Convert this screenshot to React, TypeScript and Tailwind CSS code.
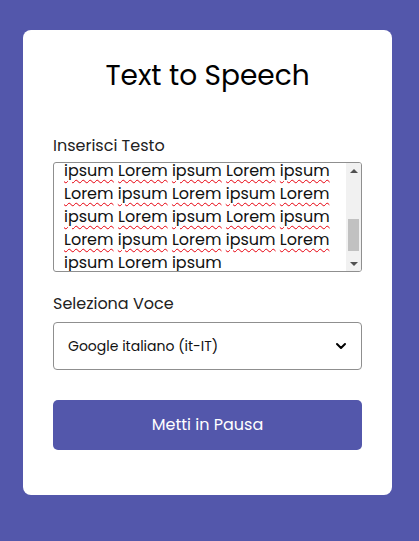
import { ChevronDown } from "lucide-react";

const lines = [
  "ipsum Lorem ipsum Lorem ipsum",
  "Lorem ipsum Lorem ipsum Lorem",
  "ipsum Lorem ipsum Lorem ipsum",
  "Lorem ipsum Lorem ipsum Lorem",
  "ipsum Lorem ipsum",
];

function Word({ text }: { text: string }) {
  return (
    <span className="underline decoration-wavy decoration-red-600 decoration-1 underline-offset-[3px]">
      {text}
    </span>
  );
}

export default function App() {
  return (
    <div className="min-h-[541px] bg-[#5357ab] px-[23px] pt-[30px] pb-[47px] font-['Poppins','Inter',sans-serif]">
      <div className="bg-white rounded-lg px-[30px] pt-[28px] pb-[45px] w-[369px]">
        <h1 className="text-[28px] leading-[36px] text-black text-center">Text to Speech</h1>

        <label className="block mt-[42px] text-[16px] leading-[20px] text-[#222]">Inserisci Testo</label>
        <div className="mt-[6px] h-[110px] border border-[#8f8f8f] rounded-[3px] flex overflow-hidden">
          <div className="flex-1 overflow-hidden pl-[10px]">
            <div className="-mt-[4px] text-[16px] leading-[23px] text-[#111]">
              {lines.map((line, i) => (
                <div key={i} className="whitespace-nowrap">
                  {line.split(" ").map((w, j) => (
                    <span key={j}>
                      {j > 0 && " "}
                      <Word text={w} />
                    </span>
                  ))}
                </div>
              ))}
            </div>
          </div>
          <div className="w-[15px] bg-[#f1f1f1] flex flex-col items-center">
            <div className="h-[15px] flex items-center justify-center">
              <div className="w-0 h-0 border-l-[4px] border-r-[4px] border-b-[4px] border-l-transparent border-r-transparent border-b-[#505050]" />
            </div>
            <div className="flex-1 w-full px-[2px] flex flex-col">
              <div className="h-[41px]" />
              <div className="h-[32px] bg-[#c1c1c1]" />
            </div>
            <div className="h-[15px] flex items-center justify-center">
              <div className="w-0 h-0 border-l-[4px] border-r-[4px] border-t-[4px] border-l-transparent border-r-transparent border-t-[#505050]" />
            </div>
          </div>
        </div>

        <label className="block mt-[22px] text-[16px] leading-[20px] text-[#222]">Seleziona Voce</label>
        <div className="mt-[8px] h-[48px] border border-[#8f8f8f] rounded-[4px] flex items-center justify-between pl-[14px] pr-[12px]">
          <span className="text-[14px] text-[#111]">Google italiano (it-IT)</span>
          <ChevronDown className="size-4 text-black" strokeWidth={3} />
        </div>

        <button className="mt-[30px] w-full h-[50px] bg-[#5357ab] rounded-[5px] text-white text-[16px]">
          Metti in Pausa
        </button>
      </div>
    </div>
  );
}
